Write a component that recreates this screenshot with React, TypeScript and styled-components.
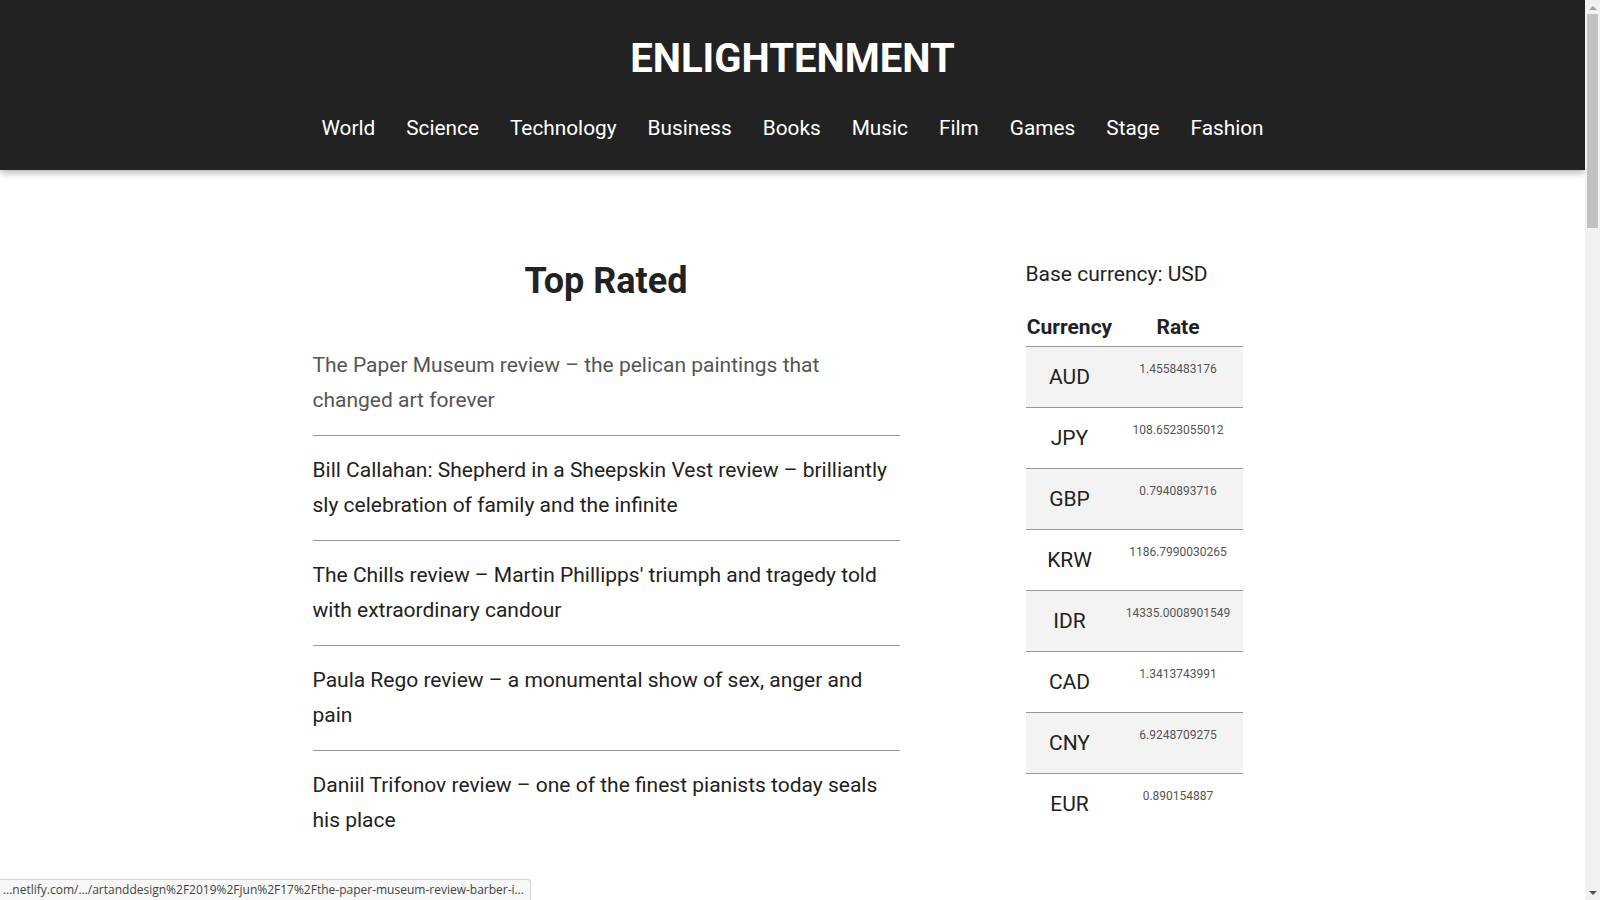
import React from "react";
import styled, { createGlobalStyle } from "styled-components";

const GlobalStyle = createGlobalStyle`
  html {
    scrollbar-width: none;
  }
  html::-webkit-scrollbar {
    display: none;
  }
  html, body {
    margin: 0;
    padding: 0;
    background: #ffffff;
  }
  body {
    font-family: Roboto, "Liberation Sans", Arial, sans-serif;
    color: #222222;
  }
  * { box-sizing: border-box; }
`;

const Page = styled.div`
  min-height: 3660px;
  margin-right: 15px;
`;

const Header = styled.header`
  position: relative;
  z-index: 1;
  background: #222222;
  box-shadow: 0 2px 8px rgba(0, 0, 0, 0.35);
  padding: 35px 0 24px;
  text-align: center;
`;

const SiteTitle = styled.h1`
  margin: 0;
  font-size: 40px;
  line-height: 48px;
  font-weight: 700;
  color: #ffffff;
`;

const NavList = styled.ul`
  list-style: none;
  margin: 28px 0 0;
  padding: 0;
  display: flex;
  justify-content: center;
  gap: 31px;
`;

const NavLink = styled.a`
  display: block;
  color: #ffffff;
  font-size: 20.8px;
  line-height: 35.36px;
  text-decoration: none;
`;

const Container = styled.main`
  max-width: 960px;
  margin: 0 auto;
  padding-top: 86px;
  display: grid;
  grid-template-columns: 587px 1fr;
  column-gap: 126px;
  align-items: start;
`;

const Column = styled.section``;

const SectionTitle = styled.h2`
  margin: 4px 0 29px;
  text-align: center;
  font-size: 36px;
  line-height: 42px;
  font-weight: 700;
  color: #222222;
`;

const ArticleList = styled.ul`
  list-style: none;
  margin: 0;
  padding: 0;
`;

const ArticleItem = styled.li`
  padding: 16.3px 0;
  border-top: 1px solid #999999;
  &:first-child {
    border-top: none;
  }
`;

const ArticleLink = styled.a<{ $active?: boolean }>`
  color: ${(p) => (p.$active ? "#555555" : "#222222")};
  text-decoration: none;
  font-size: 21px;
  line-height: 35.7px;
`;

const BaseLabel = styled.p`
  margin: 1px 0 16px;
  font-size: 21px;
  line-height: 35.36px;
`;

const RateTable = styled.table`
  width: 217px;
  border-collapse: collapse;
  table-layout: fixed;
`;

const HeadCell = styled.th<{ $w?: number }>`
  width: ${(p) => (p.$w ? `${p.$w}px` : "auto")};
  padding: 0 0 1px;
  font-size: 21px;
  line-height: 36px;
  font-weight: 700;
  text-align: center;
  color: #222222;
`;

const RateRow = styled.tr`
  border-top: 1px solid #999999;
  &:nth-child(odd) {
    background: #f3f3f3;
  }
`;

const CodeCell = styled.td`
  padding: 12px 0;
  font-size: 21px;
  line-height: 36px;
  text-align: center;
  vertical-align: top;
  color: #222222;
`;

const ValueCell = styled.td`
  padding: 12px 0;
  font-size: 12px;
  line-height: 20.4px;
  text-align: center;
  vertical-align: top;
  color: #555555;
`;

const StatusBubble = styled.div`
  position: fixed;
  left: 0;
  bottom: 0;
  z-index: 10;
  width: 531px;
  height: 21px;
  padding: 2px 4px 0 3px;
  background: #f7f7f7;
  border: 1px solid #d4d4d4;
  border-left: none;
  border-bottom: none;
  border-top-right-radius: 3px;
  font-family: "Open Sans", "DejaVu Sans", sans-serif;
  font-size: 12px;
  line-height: 16px;
  color: #444444;
  white-space: nowrap;
  overflow: hidden;
`;

const ScrollBar = styled.div`
  position: fixed;
  top: 0;
  right: 0;
  z-index: 20;
  width: 15px;
  height: 100vh;
  background: #f1f1f1;
  display: flex;
  flex-direction: column;
`;

const ScrollButton = styled.div`
  height: 14px;
  flex: none;
  display: flex;
  align-items: center;
  justify-content: center;
`;

const ScrollTrack = styled.div`
  flex: 1;
  padding: 0 2px;
`;

const ScrollThumb = styled.div`
  height: 214px;
  background: #c1c1c1;
`;

const Arrow = ({ up, color }: { up?: boolean; color: string }) => (
  <svg width="8" height="5" viewBox="0 0 8 5" aria-hidden="true">
    <path d={up ? "M0 5 L4 1 L8 5 Z" : "M0 0 L8 0 L4 4 Z"} fill={color} />
  </svg>
);

const sections = [
  "World",
  "Science",
  "Technology",
  "Business",
  "Books",
  "Music",
  "Film",
  "Games",
  "Stage",
  "Fashion",
];

const articles = [
  "The Paper Museum review – the pelican paintings that changed art forever",
  "Bill Callahan: Shepherd in a Sheepskin Vest review – brilliantly sly celebration of family and the infinite",
  "The Chills review – Martin Phillipps' triumph and tragedy told with extraordinary candour",
  "Paula Rego review – a monumental show of sex, anger and pain",
  "Daniil Trifonov review – one of the finest pianists today seals his place",
];

const rates: [string, string][] = [
  ["AUD", "1.4558483176"],
  ["JPY", "108.6523055012"],
  ["GBP", "0.7940893716"],
  ["KRW", "1186.7990030265"],
  ["IDR", "14335.0008901549"],
  ["CAD", "1.3413743991"],
  ["CNY", "6.9248709275"],
  ["EUR", "0.890154887"],
];

export default function App() {
  return (
    <Page>
      <GlobalStyle />
      <Header>
        <SiteTitle>ENLIGHTENMENT</SiteTitle>
        <nav>
          <NavList>
            {sections.map((s) => (
              <li key={s}>
                <NavLink href="#">{s}</NavLink>
              </li>
            ))}
          </NavList>
        </nav>
      </Header>
      <Container>
        <Column>
          <SectionTitle>Top Rated</SectionTitle>
          <ArticleList>
            {articles.map((a, i) => (
              <ArticleItem key={a}>
                <ArticleLink href="#" $active={i === 0}>
                  {a}
                </ArticleLink>
              </ArticleItem>
            ))}
          </ArticleList>
        </Column>
        <Column>
          <BaseLabel>Base currency: USD</BaseLabel>
          <RateTable>
            <thead>
              <tr>
                <HeadCell $w={88}>Currency</HeadCell>
                <HeadCell>Rate</HeadCell>
              </tr>
            </thead>
            <tbody>
              {rates.map(([code, value]) => (
                <RateRow key={code}>
                  <CodeCell>{code}</CodeCell>
                  <ValueCell>{value}</ValueCell>
                </RateRow>
              ))}
            </tbody>
          </RateTable>
        </Column>
      </Container>
      <StatusBubble>
        …netlify.com/…/artanddesign%2F2019%2Fjun%2F17%2Fthe-paper-museum-review-barber-i…
      </StatusBubble>
      <ScrollBar aria-hidden="true">
        <ScrollButton>
          <Arrow up color="#a3a3a3" />
        </ScrollButton>
        <ScrollTrack>
          <ScrollThumb />
        </ScrollTrack>
        <ScrollButton>
          <Arrow color="#505050" />
        </ScrollButton>
      </ScrollBar>
    </Page>
  );
}
